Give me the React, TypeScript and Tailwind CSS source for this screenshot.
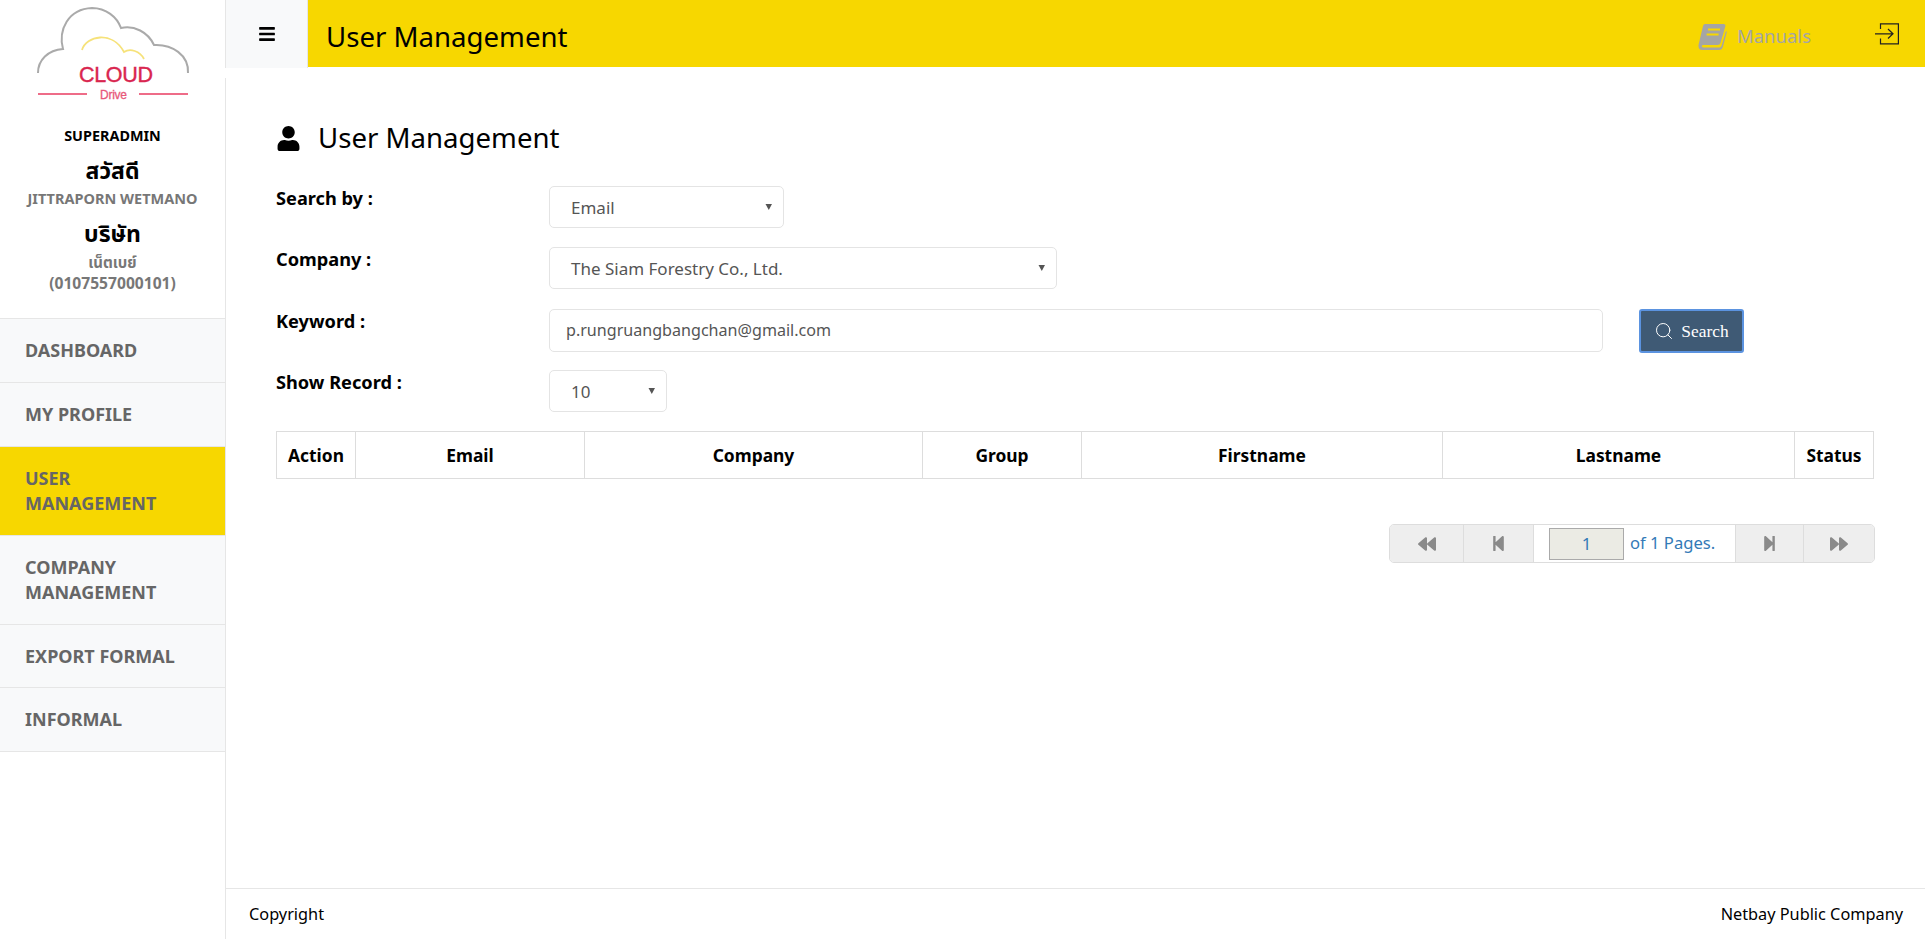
import { Search } from "lucide-react";
import { FaBackward, FaBars, FaForward, FaStepBackward, FaStepForward, FaUser } from "react-icons/fa";

const FONT = "font-['Tahoma','Noto_Sans','Noto_Sans_Thai','DejaVu_Sans',sans-serif]";

const NAV = [
  { label: "DASHBOARD", height: "h-[64px]" },
  { label: "MY PROFILE", height: "h-[64px]" },
  { label: "USER MANAGEMENT", height: "h-[89px]", active: true, wrap: true },
  { label: "COMPANY MANAGEMENT", height: "h-[89px]", wrap: true },
  { label: "EXPORT FORMAL", height: "h-[63px]" },
  { label: "INFORMAL", height: "h-[64px]" },
];

const COLUMNS = [
  { label: "Action", width: "w-[79px]" },
  { label: "Email", width: "w-[229px]" },
  { label: "Company", width: "w-[338px]" },
  { label: "Group", width: "w-[159px]" },
  { label: "Firstname", width: "w-[361px]" },
  { label: "Lastname", width: "w-[352px]" },
  { label: "Status", width: "flex-1" },
];

function Logo() {
  return (
    <svg width="226" height="104" viewBox="0 0 226 104" className="block">
      <path
        d="M38 73 C38 60 48 50 63 49 C58 30 68 9 92 8 C106 8 117 17 121 28 C134 25 148 32 154 45 C172 44 189 55 188 73"
        fill="none"
        stroke="#aaaaaa"
        strokeWidth="2"
      />
      <path
        d="M82 50 C86 36 112 30 124 52 C130 48 140 51 144 59"
        fill="none"
        stroke="#f6e27a"
        strokeWidth="1.8"
      />
      <text
        x="79"
        y="82"
        fill="#d9264f"
        stroke="#d9264f"
        strokeWidth="0.4"
        fontSize="21.5"
        fontFamily="Liberation Sans"
        textLength="74"
      >
        CLOUD
      </text>
      <text
        x="100"
        y="99"
        fill="#e8597a"
        stroke="#e8597a"
        strokeWidth="0.3"
        fontSize="12"
        fontFamily="Liberation Sans"
        textLength="27"
      >
        Drive
      </text>
      <path d="M38 94 H87 M139 94 H188" stroke="#ee6c88" strokeWidth="2" />
    </svg>
  );
}

function BookIcon() {
  return (
    <svg width="29" height="27" viewBox="0 0 29 27">
      <path
        d="M7 1 H25.5 Q28 1 27.3 3.5 L22.5 20 Q22 22 19.5 22 H6 Q3.5 22 3.8 23.3 Q4 24.5 6 24.5 H21 Q23 24.5 23.5 23 L28 8 L28.8 9 L25 23.5 Q24 27 21 27 H4.5 Q0 27 0.5 22 L5 3 Q5.5 1 7 1 Z"
        fill="#a5a5a5"
      />
      <path d="M10 6.5 H22 M8.6 11.5 H20.6" stroke="#f7d700" strokeWidth="1.8" />
    </svg>
  );
}

function Sidebar() {
  return (
    <aside className="flex w-[225px] shrink-0 flex-col">
      <div className="h-[118px]">
        <Logo />
      </div>
      <div className="flex h-[200px] flex-col items-center text-center">
        <p className="mt-[7px] text-[14.4px] leading-[22px] font-bold text-black">SUPERADMIN</p>
        <p className="mt-[7px] text-[23px] leading-[32px] font-bold text-black">สวัสดี</p>
        <p className="mt-[1px] text-[14.5px] leading-[22px] font-bold text-[#777777]">JITTRAPORN WETMANO</p>
        <p className="mt-[7px] text-[23px] leading-[34px] font-bold text-black">บริษัท</p>
        <p className="mt-[2px] text-[15px] leading-[21px] font-bold text-[#777777]">เน็ตเบย์</p>
        <p className="text-[15.6px] leading-[21px] font-bold text-[#777777]">(0107557000101)</p>
      </div>
      <nav className="border-t border-[#e6e6e6]">
        {NAV.map((item) => (
          <div
            key={item.label}
            className={`flex items-center border-b border-[#e6e6e6] px-[25px] text-[18px] leading-[25px] font-bold text-[#666666] ${item.height} ${
              item.active ? "bg-[#f7d700]" : "bg-[#f8f9fa]"
            }`}
          >
            <span className={item.wrap ? "w-[150px]" : ""}>{item.label}</span>
          </div>
        ))}
      </nav>
    </aside>
  );
}

function Header() {
  return (
    <header className="flex h-[67px] shrink-0">
      <div className="flex h-[68px] w-[83px] shrink-0 items-center justify-center border-x border-[#e6e6e6] bg-[#f8f9fa]">
        <FaBars className="text-[18px] text-black" />
      </div>
      <div className="flex flex-1 items-center bg-[#f7d700] pl-[18px] pr-[26px]">
        <h1 className="pt-[6px] text-[27.6px] font-normal text-black">User Management</h1>
        <div className="ml-auto flex items-center gap-[10px] pt-[5px] text-[18.5px] text-[#a5a5a5]">
          <BookIcon />
          <span>Manuals</span>
        </div>
        <svg width="24" height="22" viewBox="0 0 24 22" className="ml-[64px]" fill="none" stroke="#222222" strokeWidth="1.2">
          <path d="M5.5 6 V0.8 H23.4 V20.8 H5.5 V15.5" />
          <path d="M0 10.8 H17.5 M13 6 L18 10.8 L13 15.5" />
        </svg>
      </div>
    </header>
  );
}

function Field({ label, children }: { label: string; children: React.ReactNode }) {
  return (
    <div className="flex h-[42px]">
      <label className="w-[273px] shrink-0 text-[18.2px] leading-[24px] font-bold text-black">{label}</label>
      {children}
    </div>
  );
}

function SelectBox({ value, width }: { value: string; width: string }) {
  return (
    <div
      className={`flex h-[42px] items-center justify-between rounded-[5px] border border-[#e4e4e4] bg-white pl-[21px] pr-[10px] text-[17px] text-[#555555] ${width}`}
    >
      <span className="pt-[1px]">{value}</span>
      <svg width="8" height="8" viewBox="0 0 8 8">
        <path d="M0.5 1 H7 L3.8 7 Z" fill="#555555" />
      </svg>
    </div>
  );
}

function Pagination() {
  const cell = "flex h-full items-center justify-center bg-[#eeeeee] text-[#8a8a8a]";
  return (
    <div className="flex h-[39px] w-[486px] overflow-hidden rounded-[5px] border border-[#dddddd]">
      <div className={`${cell} w-[74px] border-r border-[#dddddd] text-[18px]`}>
        <FaBackward />
      </div>
      <div className={`${cell} w-[69px] text-[17px]`}>
        <FaStepBackward />
      </div>
      <div className="flex flex-1 items-center border-x border-[#dddddd] bg-white pl-[15px] text-[16.6px] text-[#337ab7]">
        <div className="flex h-[32px] w-[75px] items-center justify-center border border-[#aaaaaa] bg-[#ebebe4] text-[17px]">
          1
        </div>
        <span className="ml-[6px]">of 1 Pages.</span>
      </div>
      <div className={`${cell} w-[68px] border-r border-[#dddddd] text-[17px]`}>
        <FaStepForward />
      </div>
      <div className={`${cell} w-[70px] text-[18px]`}>
        <FaForward />
      </div>
    </div>
  );
}

function Content() {
  return (
    <main className="mt-[11px] flex flex-1 flex-col border-l border-[#e6e6e6]">
      <div className="flex-1 pl-[50px] pr-[50px]">
        <div className="mt-[43px] flex h-[34px] items-center">
          <FaUser className="text-[25px] text-black" />
          <h2 className="ml-[17px] text-[27.6px] font-normal text-black">User Management</h2>
        </div>
        <div className="mt-[31px] flex flex-col gap-[19.4px]">
          <Field label="Search by :">
            <SelectBox value="Email" width="w-[235px]" />
          </Field>
          <Field label="Company :">
            <SelectBox value="The Siam Forestry Co., Ltd." width="w-[508px]" />
          </Field>
          <Field label="Keyword :">
            <div className="flex h-[43px] w-[1054px] items-center rounded-[5px] border border-[#e4e4e4] bg-white pl-[16px] text-[16.1px] text-[#555555]">
              p.rungruangbangchan@gmail.com
            </div>
            <button className="ml-[36px] flex h-[44px] w-[105px] items-center justify-center gap-[7px] rounded-[3px] border-2 border-[#5b93e0] bg-[#3f5a75] font-['Liberation_Serif',serif] text-[17.4px] font-normal text-white">
              <Search size={20} strokeWidth={1.2} />
              Search
            </button>
          </Field>
          <Field label="Show Record :">
            <SelectBox value="10" width="w-[118px]" />
          </Field>
        </div>
        <div className="mt-[19px] flex h-[48px] w-[1598px] border border-[#dddddd]">
          {COLUMNS.map((col, i) => (
            <div
              key={col.label}
              className={`flex items-center justify-center text-[17.4px] font-bold text-black ${col.width} ${
                i < COLUMNS.length - 1 ? "border-r border-[#dddddd]" : ""
              }`}
            >
              {col.label}
            </div>
          ))}
        </div>
        <div className="mt-[45px] flex w-[1599px] justify-end">
          <Pagination />
        </div>
      </div>
      <footer className="flex h-[51px] shrink-0 items-center justify-between border-t border-[#e6e6e6] pl-[23px] pr-[22px] text-[16.3px] text-black">
        <span>Copyright</span>
        <span>Netbay Public Company</span>
      </footer>
    </main>
  );
}

export default function App() {
  return (
    <div className={`flex h-[939px] bg-white ${FONT}`}>
      <Sidebar />
      <div className="flex min-w-0 flex-1 flex-col">
        <Header />
        <Content />
      </div>
    </div>
  );
}
